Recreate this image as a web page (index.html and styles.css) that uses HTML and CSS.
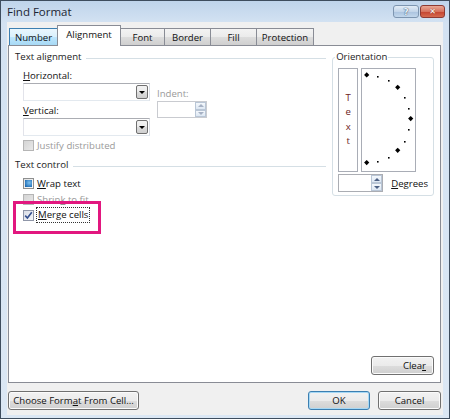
FILE: index.html
```html
<!DOCTYPE html>
<html lang="en">
  <head>
    <meta charset="UTF-8" />
    <title>Find Format</title>
    <link rel="stylesheet" href="styles.css">
  </head>
  <body>
    <div class="window">
      <div class="titlebar">
        <span class="title">Find Format</span>
        <div class="caption">
          <span class="cap-btn help">?</span>
          <span class="cap-btn close">&#x2715;</span>
        </div>
      </div>

      <div class="dialog">
        <div class="tabs">
          <div class="tab hover">Number</div>
          <div class="tab active">Alignment</div>
          <div class="tab w-font">Font</div>
          <div class="tab w-border">Border</div>
          <div class="tab w-fill">Fill</div>
          <div class="tab w-prot">Protection</div>
        </div>

        <div class="panel">
          <div class="main">
            <div class="left">
              <div class="heading"><span>Text alignment</span><i class="rule"></i></div>
              <div class="align-grid">
                <label class="lbl"><u>H</u>orizontal:</label>
                <span></span>
                <div class="combo"><span class="drop"></span></div>
                <label class="lbl disabled">Indent:</label>
                <label class="lbl bottom"><u>V</u>ertical:</label>
                <div class="spin small disabled">
                  <span class="arrows"><i class="up"></i><i class="down"></i></span>
                </div>
                <div class="combo"><span class="drop"></span></div>
              </div>
              <div class="check-row justify">
                <span class="box off"></span><span class="disabled">Justify distributed</span>
              </div>

              <div class="heading control"><span>Text control</span><i class="rule"></i></div>
              <div class="checks">
                <div class="check-row">
                  <span class="box mixed"></span><span><u>W</u>rap text</span>
                </div>
                <div class="check-row">
                  <span class="box off"></span><span class="disabled">Shrin<u>k</u> to fit</span>
                </div>
                <div class="check-row merge">
                  <span class="box checked">
                    <svg width="9" height="9" viewBox="0 0 9 9"><path d="M1.2 4.6 L3.4 7 L7.8 1.2" fill="none" stroke="#34508f" stroke-width="1.6"/></svg>
                  </span>
                  <span class="focus"><u>M</u>erge cells</span>
                  <span class="highlight"></span>
                </div>
              </div>
            </div>

            <fieldset class="orient">
              <legend>Orientation</legend>
              <div class="dial-row">
                <div class="vtext">Text</div>
                <div class="dial">
                  <svg width="53" height="102" viewBox="0 0 53 102">
                    <g fill="#000">
                      <path d="M4.7 3.3 l2.6 2.6 l-2.6 2.6 l-2.6 -2.6 z"/>
                      <path d="M35.7 15.7 l2.6 2.6 l-2.6 2.6 l-2.6 -2.6 z"/>
                      <path d="M48.7 47 l2.6 2.6 l-2.6 2.6 l-2.6 -2.6 z"/>
                      <path d="M35.7 78.7 l2.6 2.6 l-2.6 2.6 l-2.6 -2.6 z"/>
                      <path d="M4.7 91 l2.6 2.6 l-2.6 2.6 l-2.6 -2.6 z"/>
                      <rect x="15" y="7" width="1.6" height="1.6"/>
                      <rect x="26" y="11" width="1.6" height="1.6"/>
                      <rect x="42" y="28" width="1.6" height="1.6"/>
                      <rect x="46" y="39" width="1.6" height="1.6"/>
                      <rect x="46" y="60" width="1.6" height="1.6"/>
                      <rect x="42" y="72" width="1.6" height="1.6"/>
                      <rect x="26" y="88" width="1.6" height="1.6"/>
                      <rect x="15" y="92" width="1.6" height="1.6"/>
                    </g>
                  </svg>
                </div>
              </div>
              <div class="degree-row">
                <div class="spin deg">
                  <span class="arrows"><i class="up"></i><i class="down"></i></span>
                </div>
                <span><u>D</u>egrees</span>
              </div>
            </fieldset>
          </div>

          <div class="panel-foot">
            <button class="btn clear">Clea<u>r</u></button>
          </div>
        </div>

        <div class="footer">
          <button class="btn choose">Choose Form<u>a</u>t From Cell...</button>
          <div class="actions">
            <button class="btn ok">OK</button>
            <button class="btn cancel">Cancel</button>
          </div>
        </div>
      </div>
    </div>
  </body>
</html>
```

FILE: styles.css
```css
body {
  margin: 0;
  font-family: "Open Sans", "Noto Sans", sans-serif;
  font-size: 9.6px;
  font-weight: 500;
  color: #111;
}

u {
  text-decoration: underline;
  text-underline-offset: 1px;
}

.window {
  width: 450px;
  height: 419px;
  box-sizing: border-box;
  border: 1px solid #3e4d5e;
  padding: 0 6px 3px 6px;
  display: flex;
  flex-direction: column;
  background: linear-gradient(to bottom, #bfd4eb 0%, #d3e2f2 22px, #dbe7f4 100%);
}

/* title bar */
.titlebar {
  height: 21px;
  display: flex;
  justify-content: space-between;
  align-items: flex-start;
  margin-right: -2px;
}
.title {
  font-size: 11.5px;
  font-weight: 400;
  line-height: 22px;
  color: #1b2533;
}
.caption {
  display: flex;
  gap: 1px;
  margin-top: 4px;
}
.cap-btn {
  height: 13px;
  box-sizing: border-box;
  border-radius: 3px;
  display: flex;
  align-items: center;
  justify-content: center;
  color: #fff;
  font-family: "DejaVu Sans", sans-serif;
  font-weight: bold;
}
.help {
  width: 26px;
  border: 1px solid #7d95b0;
  background: linear-gradient(to bottom, #e3ecf6 0%, #c3d5e9 50%, #a9c2de 51%, #c2d7ec 100%);
  font-size: 9px;
  color: #e9f1f9;
  text-shadow: 0 0 1px #3c5675, 0 0 1px #3c5675;
}
.close {
  width: 25px;
  border: 1px solid #8d3a33;
  background: linear-gradient(to bottom, #e9a795 0%, #d6735f 50%, #c4432f 51%, #d56a4f 100%);
  font-size: 8px;
  text-shadow: 0 0 1px #6b1f17;
}

/* dialog body */
.dialog {
  flex: 1;
  background: #f0f0f0;
  padding: 3px 2px 5px 1px;
  display: flex;
  flex-direction: column;
}

.tabs {
  display: flex;
  align-items: flex-end;
  height: 20px;
  padding-left: 1px;
}
.tab {
  height: 17px;
  box-sizing: border-box;
  border: 1px solid #898c95;
  border-bottom: none;
  margin-right: -1px;
  display: flex;
  align-items: center;
  justify-content: center;
  background: linear-gradient(to bottom, #f3f3f3 0%, #ebebeb 50%, #dddddd 51%, #cfcfcf 100%);
  width: 48px;
}
.tab.hover {
  background: linear-gradient(to bottom, #eaf6fd 0%, #d9f0fc 50%, #bee6fd 51%, #a7d9f5 100%);
  border-color: #3c7fb1;
  width: 49px;
}
.tab.active {
  height: 21px;
  margin-bottom: -1px;
  width: 64px;
  background: #fff;
  position: relative;
  z-index: 1;
  padding-bottom: 3px;
}
.w-font { width: 45px; }
.w-border { width: 47px; }
.w-fill { width: 47px; }
.w-prot { width: 58px; }

.panel {
  flex: 1;
  background: #fff;
  border: 1px solid #898c95;
  display: flex;
  flex-direction: column;
}

.main {
  display: flex;
  gap: 6px;
  padding: 4px 6px 0 6px;
}

.left {
  width: 312px;
}

.heading {
  display: flex;
  align-items: center;
  line-height: 14px;
  color: #222;
}
.heading .rule {
  flex: 1;
  height: 1px;
  margin-left: 5px;
  margin-top: 2px;
  background: #d5dfe5;
}
.heading.control {
  margin-top: 5px;
}

.lbl {
  line-height: 14px;
  display: block;
}
.disabled {
  color: #9a9a9a;
}

.align-grid {
  display: grid;
  grid-template-columns: 127px 50px;
  grid-template-rows: 14px 18px 17px 18px;
  column-gap: 7px;
  margin: 5px 0 0 8px;
}
.align-grid .lbl.disabled {
  align-self: end;
}
.align-grid .bottom {
  align-self: end;
}

.combo {
  border: 1px solid #abadb3;
  border-color: #abadb3 #dbdfe6 #e3e9ef #e2e3ea;
  background: #fff;
  display: flex;
  justify-content: flex-end;
  padding: 1px;
}
.drop {
  width: 12px;
  box-sizing: border-box;
  border: 1px solid #707070;
  border-radius: 2px;
  background: linear-gradient(to bottom, #f2f2f2 0%, #ebebeb 50%, #dddddd 51%, #cfcfcf 100%);
  display: flex;
  align-items: center;
  justify-content: center;
}
.drop::after {
  content: "";
  border-left: 3px solid transparent;
  border-right: 3px solid transparent;
  border-top: 3px solid #000;
}

.spin {
  box-sizing: border-box;
  border: 1px solid #abadb3;
  background: #fff;
  display: flex;
  justify-content: flex-end;
}
.spin.small {
  border-color: #c9cbd0;
}
.arrows {
  width: 11px;
  display: flex;
  flex-direction: column;
}
.arrows i {
  flex: 1;
  border: 1px solid #b9c6d6;
  background: linear-gradient(to bottom, #f4f8fc, #dde7f3);
  display: flex;
  align-items: center;
  justify-content: center;
}
.arrows .up::after {
  content: "";
  border-left: 3px solid transparent;
  border-right: 3px solid transparent;
  border-bottom: 3px solid #4d6185;
}
.arrows .down::after {
  content: "";
  border-left: 3px solid transparent;
  border-right: 3px solid transparent;
  border-top: 3px solid #4d6185;
}
.spin.small .arrows .up::after { border-bottom-color: #a6b1c4; }
.spin.small .arrows .down::after { border-top-color: #a6b1c4; }

.check-row {
  display: flex;
  align-items: center;
  gap: 3px;
  height: 16px;
}
.check-row.justify {
  margin: 1px 0 0 8px;
}
.checks {
  margin: 3px 0 0 8px;
}
.box {
  width: 11px;
  height: 11px;
  box-sizing: border-box;
  border: 1px solid #8e8f8f;
  background: linear-gradient(135deg, #e1e1e1, #fcfcfc);
  display: flex;
  align-items: center;
  justify-content: center;
}
.box.off {
  border-color: #b5b5b5;
  background: linear-gradient(135deg, #d4d4d4, #e8e8e8);
}
.box.mixed::after {
  content: "";
  width: 7px;
  height: 7px;
  background: radial-gradient(circle at 60% 40%, #7ec1ef, #2b78bd 70%, #1d5c9c);
}
.box.checked {
  border-color: #8f96a8;
  background: linear-gradient(135deg, #d9dde6, #f6f7f9);
}

.merge {
  position: relative;
}
.focus {
  outline: 1px dotted #333;
  outline-offset: 0;
  padding: 0 1px;
  line-height: 14px;
}
.highlight {
  position: absolute;
  left: -10px;
  top: -6px;
  width: 88px;
  height: 33px;
  box-sizing: border-box;
  border: 3px solid #e2177f;
}

/* orientation group */
.orient {
  width: 101px;
  box-sizing: border-box;
  margin: 0;
  border: 1px solid #d5dfe5;
  border-radius: 3px;
  padding: 0 5px 3px 5px;
  height: 146px;
}
.orient legend {
  padding: 0 1px;
  margin-left: -3px;
  line-height: 14px;
  color: #222;
}
.dial-row {
  display: flex;
  gap: 3px;
  margin-top: 4px;
}
.vtext {
  width: 20px;
  height: 104px;
  box-sizing: border-box;
  border: 1px solid #a9adb6;
  display: flex;
  align-items: center;
  justify-content: center;
  writing-mode: vertical-rl;
  text-orientation: upright;
  letter-spacing: 1.4px;
  color: #6e2323;
}
.dial {
  width: 55px;
  height: 104px;
  box-sizing: border-box;
  border: 1px solid #a9adb6;
}
.dial svg {
  display: block;
}
.degree-row {
  display: flex;
  align-items: center;
  gap: 8px;
  margin-top: 2px;
}
.spin.deg {
  width: 45px;
  height: 18px;
}

.panel-foot {
  margin-top: auto;
  display: flex;
  justify-content: flex-end;
  padding: 0 6px 7px 0;
}

/* buttons */
.btn {
  height: 19px;
  box-sizing: border-box;
  border: 1px solid #707070;
  border-radius: 3px;
  background: linear-gradient(to bottom, #f2f2f2 0%, #ebebeb 50%, #dddddd 51%, #cfcfcf 100%);
  box-shadow: inset 0 0 0 1px #fbfbfb;
  font-family: "Open Sans", "Noto Sans", sans-serif;
  font-size: 9.6px;
  font-weight: 500;
  color: #111;
  padding: 0;
  line-height: 16px;
}
.clear {
  width: 63px;
  text-align: right;
  padding-right: 7px;
}
.footer {
  display: flex;
  justify-content: space-between;
  margin-top: 8px;
}
.choose {
  width: 131px;
}
.actions {
  display: flex;
  gap: 8px;
}
.ok {
  width: 62px;
  border-color: #3c7fb1;
  box-shadow: inset 0 0 0 1px #a6d8f5;
}
.cancel {
  width: 63px;
}
```
